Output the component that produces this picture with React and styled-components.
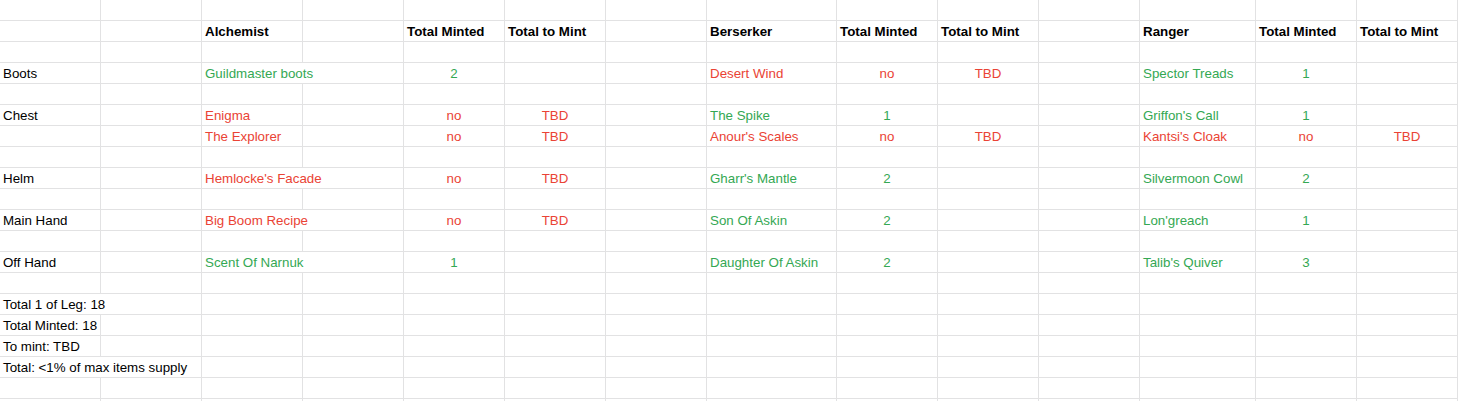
import styled, { createGlobalStyle, css } from "styled-components"

const GlobalStyle = createGlobalStyle`
  html, body {
    margin: 0;
    padding: 0;
    background: #fff;
    overflow: hidden;
  }
`

const COLUMNS = [101, 101, 101, 101, 101, 101, 101, 130, 101, 101, 101, 116, 101, 101]
const ROW_COUNT = 20

const tones = {
  green: "#34a853",
  red: "#ea4335",
  plain: "#000000",
}

const Sheet = styled.div`
  width: 1458px;
  height: 401px;
  overflow: hidden;
  font-family: "Liberation Sans", Arial, sans-serif;
  font-size: 13.33px;
`

const Row = styled.div`
  display: grid;
  grid-template-columns: ${COLUMNS.map((w) => `${w}px`).join(" ")};
  height: 21px;
`

const Cell = styled.div`
  box-sizing: border-box;
  grid-column: span ${({ span }) => span || 1};
  height: 21px;
  line-height: 22px;
  padding: 0 3px;
  border-right: 1px solid #e2e2e3;
  border-bottom: 1px solid #e2e2e3;
  white-space: nowrap;
  overflow: hidden;
  color: ${({ tone }) => tones[tone || "plain"]};
  text-align: ${({ center }) => (center ? "center" : "left")};

  ${({ bold }) =>
    bold &&
    css`
      font-weight: bold;
    `}
`

const g = (col, text, extra = {}) => ({ col, text, tone: "green", ...extra })
const r = (col, text, extra = {}) => ({ col, text, tone: "red", ...extra })
const h = (col, text) => ({ col, text, bold: true })
const p = (col, text, extra = {}) => ({ col, text, ...extra })

const headerRow = [
  h(2, "Alchemist"), h(4, "Total Minted"), h(5, "Total to Mint"),
  h(7, "Berserker"), h(8, "Total Minted"), h(9, "Total to Mint"),
  h(11, "Ranger"), h(12, "Total Minted"), h(13, "Total to Mint"),
]

const sheetRows = {
  1: headerRow,
  3: [
    p(0, "Boots"),
    g(2, "Guildmaster boots", { span: 2 }), g(4, "2", { center: true }),
    r(7, "Desert Wind"), r(8, "no", { center: true }), r(9, "TBD", { center: true }),
    g(11, "Spector Treads"), g(12, "1", { center: true }),
  ],
  5: [
    p(0, "Chest"),
    r(2, "Enigma"), r(4, "no", { center: true }), r(5, "TBD", { center: true }),
    g(7, "The Spike"), g(8, "1", { center: true }),
    g(11, "Griffon's Call"), g(12, "1", { center: true }),
  ],
  6: [
    r(2, "The Explorer"), r(4, "no", { center: true }), r(5, "TBD", { center: true }),
    r(7, "Anour's Scales"), r(8, "no", { center: true }), r(9, "TBD", { center: true }),
    r(11, "Kantsi's Cloak"), r(12, "no", { center: true }), r(13, "TBD", { center: true }),
  ],
  8: [
    p(0, "Helm"),
    r(2, "Hemlocke's Facade", { span: 2 }), r(4, "no", { center: true }), r(5, "TBD", { center: true }),
    g(7, "Gharr's Mantle"), g(8, "2", { center: true }),
    g(11, "Silvermoon Cowl"), g(12, "2", { center: true }),
  ],
  10: [
    p(0, "Main Hand"),
    r(2, "Big Boom Recipe", { span: 2 }), r(4, "no", { center: true }), r(5, "TBD", { center: true }),
    g(7, "Son Of Askin"), g(8, "2", { center: true }),
    g(11, "Lon'greach"), g(12, "1", { center: true }),
  ],
  12: [
    p(0, "Off Hand"),
    g(2, "Scent Of Narnuk", { span: 2 }), g(4, "1", { center: true }),
    g(7, "Daughter Of Askin"), g(8, "2", { center: true }),
    g(11, "Talib's Quiver"), g(12, "3", { center: true }),
  ],
  14: [p(0, "Total 1 of Leg: 18", { span: 2 })],
  15: [p(0, "Total Minted: 18")],
  16: [p(0, "To mint: TBD")],
  17: [p(0, "Total: <1% of max items supply", { span: 2 })],
}

const buildCells = (entries = []) => {
  const cells = []
  let col = 0
  while (col < COLUMNS.length) {
    const entry = entries.find((e) => e.col === col)
    if (entry) {
      cells.push(
        <Cell key={col} span={entry.span} tone={entry.tone} bold={entry.bold} center={entry.center}>
          {entry.text}
        </Cell>
      )
      col += entry.span || 1
    } else {
      cells.push(<Cell key={col} />)
      col += 1
    }
  }
  return cells
}

const App = () => {
  return (
    <>
      <GlobalStyle />
      <Sheet>
        {Array.from({ length: ROW_COUNT }, (_, i) => (
          <Row key={i}>{buildCells(sheetRows[i])}</Row>
        ))}
      </Sheet>
    </>
  )
}

export default App
